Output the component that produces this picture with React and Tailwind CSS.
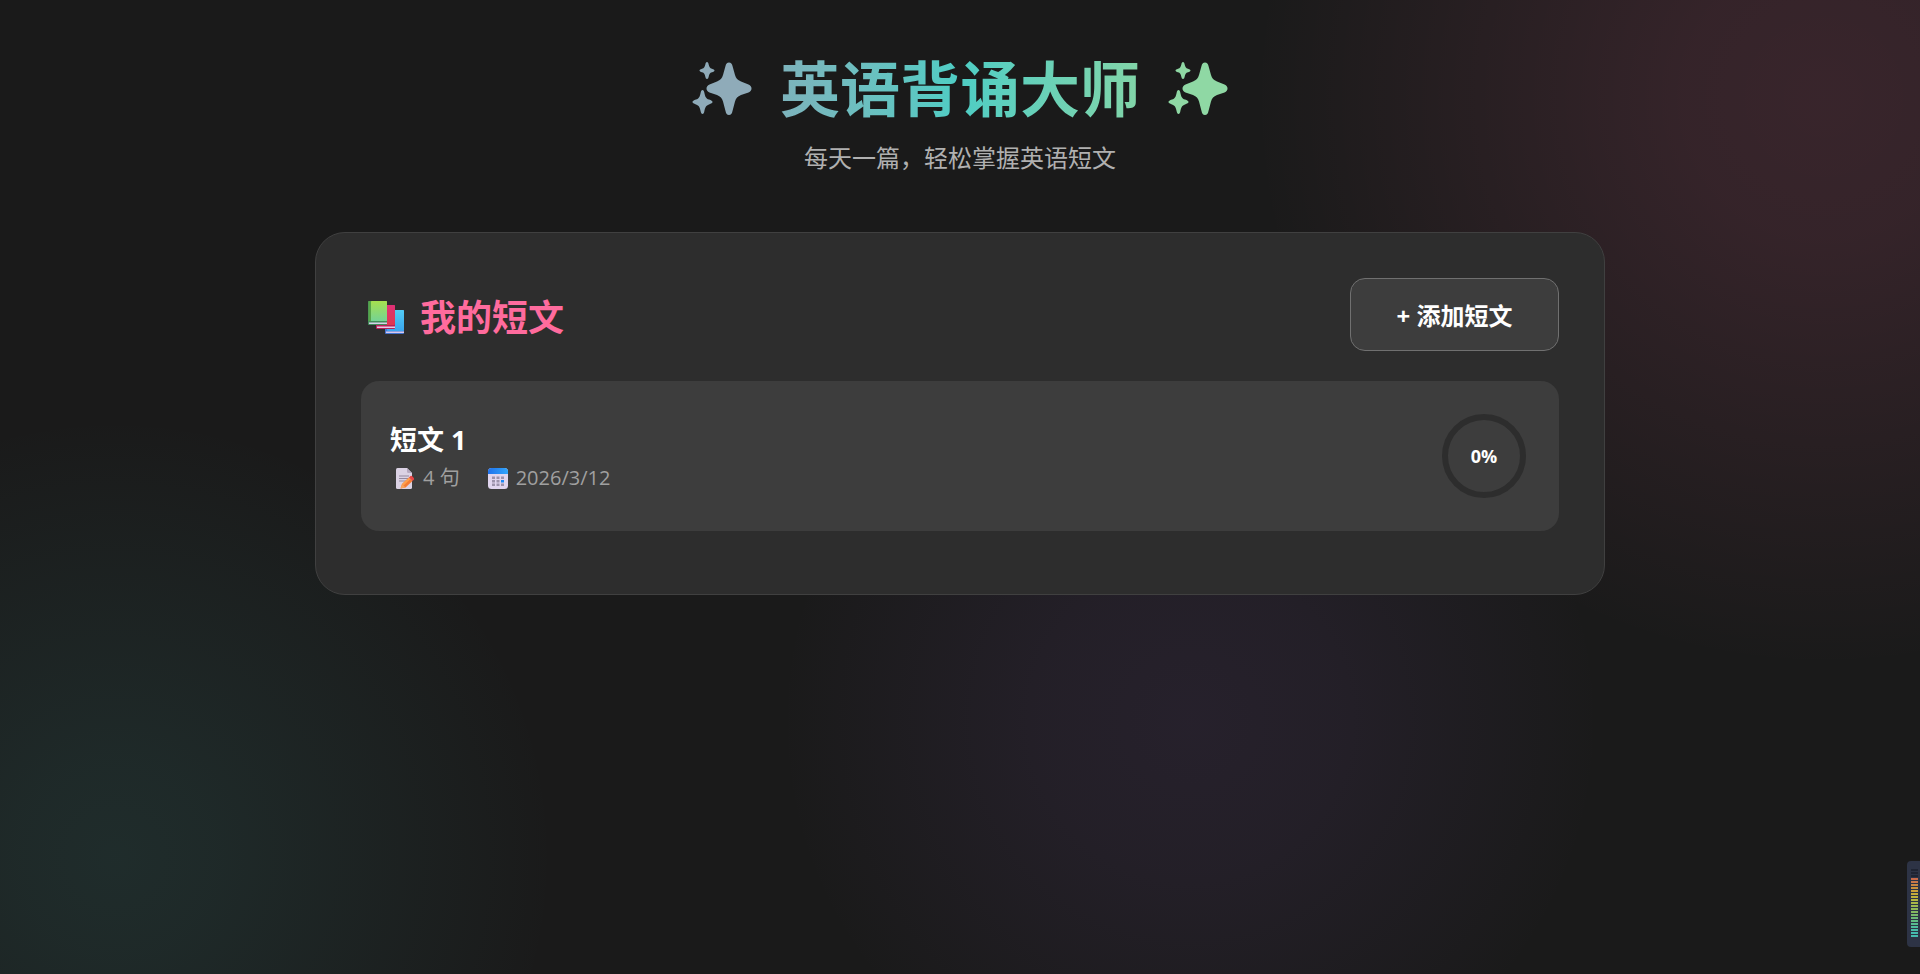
const passages = [
  { id: 1, title: "短文 1", sentences: 4, date: "2026/3/12", progress: 0 },
];

const meterColors = [
  "#1f2432", "#1f2432", "#1f2432", "#c96a4a", "#c9784a", "#c98642", "#c9923c", "#c9a03a",
  "#c4ab3a", "#bdb13c", "#b4b441", "#a9b548", "#9db650", "#90b758", "#84b861", "#78b96b",
  "#6cba76", "#61bb82", "#57bb8f", "#4fbb9b", "#49bba6", "#45bbae", "#45bbae",
];

function Sparkles() {
  return (
    <svg viewBox="0 0 60 54" className="h-[54px] w-[60px]" fill="currentColor" aria-hidden="true">
      <path d="M37 0.500C39 0.500 40 2 40.500 4L43 13C44 16.500 45.500 18 49 19.500L56.500 22.500C58.500 23.500 59.500 24.800 59.500 26.500C59.500 28.200 58.500 29.500 56.500 30.500L49 33C45.500 34.500 44 36 43 39.500L40.500 49C40 51.500 39 53 37 53C35 53 34 51.500 33.500 49L31 39.500C30 36 28.500 34.500 25 33L17.500 30.500C15.500 29.500 14.500 28.200 14.500 26.500C14.500 24.800 15.500 23.500 17.500 22.500L25 19.500C28.500 18 30 16.500 31 13L33.500 4C34 2 35 0.500 37 0.500Z" />
      <path d="M15 0C16 0 16.300 1 16.600 2.200C17.300 5.200 17.800 6 20 6.700C21.500 7.200 22.500 7.700 22.500 8.500C22.500 9.300 21.500 9.800 20 10.300C17.800 11 17.300 12 16.600 15C16.300 16.300 16 17 15 17C14 17 13.700 16.300 13.400 15C12.700 12 12.200 11 10 10.300C8.500 9.800 7.500 9.300 7.500 8.500C7.500 7.700 8.500 7.200 10 6.700C12.200 6 12.700 5.200 13.400 2.200C13.700 1 14 0 15 0Z" />
      <path d="M10.500 28C11.500 28 12 29 12.300 30.500C13.200 35 14 36.500 17 37.600C19.300 38.400 20.500 39 20.500 40C20.500 41 19.300 41.600 17 42.400C14 43.500 13.200 45 12.300 49.500C12 51 11.500 52 10.500 52C9.500 52 9 51 8.700 49.500C7.800 45 7 43.500 4 42.400C1.700 41.600 0.500 41 0.500 40C0.500 39 1.700 38.400 4 37.600C7 36.500 7.800 35 8.700 30.500C9 29 9.500 28 10.500 28Z" />
    </svg>
  );
}

function BooksIcon() {
  return (
    <svg viewBox="0 0 36 33" className="h-[33px] w-9" aria-hidden="true">
      <defs>
        <linearGradient id="book-green" x1="0" y1="0" x2="0" y2="1">
          <stop offset="0" stopColor="#a6e04e" />
          <stop offset="1" stopColor="#74d394" />
        </linearGradient>
        <linearGradient id="book-red" x1="0" y1="0" x2="0" y2="1">
          <stop offset="0" stopColor="#e03077" />
          <stop offset="1" stopColor="#e0364f" />
        </linearGradient>
        <linearGradient id="book-blue" x1="0" y1="0" x2="0" y2="1">
          <stop offset="0" stopColor="#52cbf5" />
          <stop offset="1" stopColor="#3aa6ee" />
        </linearGradient>
      </defs>
      <rect x="17" y="9" width="19" height="24" rx="1" fill="#4474cf" />
      <rect x="19" y="9" width="17" height="21" rx="1" fill="url(#book-blue)" />
      <rect x="18" y="30.500" width="18" height="1.500" fill="#d6c9ef" />
      <rect x="8" y="4" width="19" height="24" rx="1" fill="#b81f58" />
      <rect x="10" y="4" width="17" height="20" rx="1" fill="url(#book-red)" />
      <rect x="9" y="25.500" width="18" height="1.500" fill="#e6c9e6" />
      <rect x="0" y="0" width="19" height="24" rx="1" fill="#438a5a" />
      <rect x="0.500" y="0" width="2.500" height="20" fill="#57a548" />
      <rect x="3" y="0" width="16" height="20" rx="0.500" fill="url(#book-green)" />
      <rect x="1" y="21.500" width="18" height="1.500" fill="#d6d0ea" />
    </svg>
  );
}

function MemoIcon() {
  return (
    <svg viewBox="0 0 19 21" className="h-[21px] w-[19px]" aria-hidden="true">
      <path d="M1.500 0H11L16 5V19.500Q16 21 14.500 21H1.500Q0 21 0 19.500V1.500Q0 0 1.500 0Z" fill="#dbd2e4" />
      <path d="M11 0L16 5H12.500Q11 5 11 3.500Z" fill="#b5a9c0" />
      <path d="M3 8H13M3 10.500H13M3 13H10" stroke="#94899f" strokeWidth="1" />
      <path d="M4.500 20.500L6 16L13 9.500L16.500 13L9.500 19.500Z" fill="#f67c34" />
      <path d="M6 16L13 9.500L14.500 11L7.500 17.500Z" fill="#ffa04d" />
      <path d="M13 9.500L14.500 8Q15.500 7.500 16.500 8.500L17.800 10Q18.500 11 17.800 11.800L16.500 13Z" fill="#e84545" />
      <path d="M4.500 20.500L6 16L9.500 19.500Z" fill="#f7a45e" />
    </svg>
  );
}

function CalendarIcon() {
  return (
    <svg viewBox="0 0 20 21" className="h-[21px] w-5" aria-hidden="true">
      <defs>
        <linearGradient id="calendar-top" x1="0" y1="0" x2="1" y2="0">
          <stop offset="0" stopColor="#2072ec" />
          <stop offset="1" stopColor="#31a5fb" />
        </linearGradient>
      </defs>
      <rect width="20" height="21" rx="3.500" fill="#e0d5ee" />
      <path d="M0 6V3.500Q0 0 3.500 0H16.500Q20 0 20 3.500V6Z" fill="url(#calendar-top)" />
      <path d="M4 8.500h3v2.500h-3zM8.500 8.500h3v2.500h-3zM13 8.500h3v2.500h-3zM4 12h3v2.500h-3zM8.500 12h3v2.500h-3zM4 15.500h3v2.500h-3zM8.500 15.500h3v2.500h-3zM13 15.500h3v2.500h-3z" fill="#9c92ab" />
      <rect x="13" y="12" width="3" height="2.500" fill="#1b88f5" />
    </svg>
  );
}

function ProgressRing({ value }) {
  const length = 2 * Math.PI * 39;
  return (
    <div className="grid size-[84px] shrink-0 place-items-center">
      <svg viewBox="0 0 84 84" className="col-start-1 row-start-1 size-[84px] -rotate-90" fill="none" strokeWidth="6" aria-hidden="true">
        <circle cx="42" cy="42" r="39" stroke="#2d2d2d" />
        {value > 0 && (
          <circle cx="42" cy="42" r="39" stroke="#4ecdc4" strokeDasharray={length} strokeDashoffset={length * (1 - value / 100)} />
        )}
      </svg>
      <span className="col-start-1 row-start-1 text-lg font-bold">{value}%</span>
    </div>
  );
}

function PassageItem({ passage }) {
  return (
    <li className="flex items-center justify-between rounded-[18px] bg-[#3d3d3d] py-[33px] pr-[33px] pl-[29px]">
      <div className="pt-1">
        <h3 className="text-[27px] leading-10 font-bold">{passage.title}</h3>
        <p className="flex items-center pl-1.5 text-xl leading-9 text-[#a0a0a0]">
          <MemoIcon />
          <span className="ml-2">{passage.sentences} 句</span>
          <span className="ml-7"><CalendarIcon /></span>
          <span className="ml-2">{passage.date}</span>
        </p>
      </div>
      <ProgressRing value={passage.progress} />
    </li>
  );
}

function LevelMeter() {
  return (
    <div className="fixed right-0 bottom-[27px] flex h-[86px] w-[13px] flex-col gap-px rounded-l-[4px] bg-[#2d3345] pt-2 pl-1">
      {meterColors.map((color, i) => (
        <span key={i} className="h-0.5 w-[7px] shrink-0" style={{ backgroundColor: color }} />
      ))}
    </div>
  );
}

export default function App() {
  return (
    <div className="min-h-screen bg-[#1a1a1a] bg-[radial-gradient(circle_at_95%_10%,#ff6b9d22_0,#ff6b9d1e_140px,transparent_570px),radial-gradient(circle_at_6%_88%,#4ecdc41a_0,#4ecdc416_100px,transparent_440px),radial-gradient(circle_at_62%_74%,#925cc81a_0,#925cc814_150px,transparent_410px)] px-6 pt-12 pb-12 font-['Open_Sans','Noto_Sans_CJK_SC',sans-serif] text-white">
      <header className="text-center">
        <h1 className="mx-auto flex w-fit items-center gap-[28px] text-[60px] leading-[82px] font-bold">
          <span className="text-[#8fabb9]"><Sparkles /></span>
          <span className="bg-linear-to-r from-[#7db3bc] via-[#4ecdc4] to-[#82d5a8] bg-clip-text text-transparent">英语背诵大师</span>
          <span className="text-[#8fd8a4]"><Sparkles /></span>
        </h1>
        <p className="mt-2.5 text-2xl leading-9 text-[#b0b0b0]">每天一篇，轻松掌握英语短文</p>
      </header>

      <main className="mx-auto mt-14 max-w-[1290px] rounded-[30px] border border-[#404040] bg-[#2d2d2d] px-[45px] pt-[45px] pb-[63px]">
        <div className="mb-[30px] flex items-center justify-between">
          <h2 className="flex items-center gap-4 pt-1.5 pl-[7px] text-4xl leading-[60px] font-bold text-[#ff6b9d]">
            <BooksIcon />
            我的短文
          </h2>
          <button type="button" className="h-[73px] w-[209px] rounded-[15px] border border-[#707070] bg-[#3d3d3d] pt-0.5 text-2xl font-bold">
            + 添加短文
          </button>
        </div>
        <ul>
          {passages.map((p) => (
            <PassageItem key={p.id} passage={p} />
          ))}
        </ul>
      </main>

      <LevelMeter />
    </div>
  );
}
